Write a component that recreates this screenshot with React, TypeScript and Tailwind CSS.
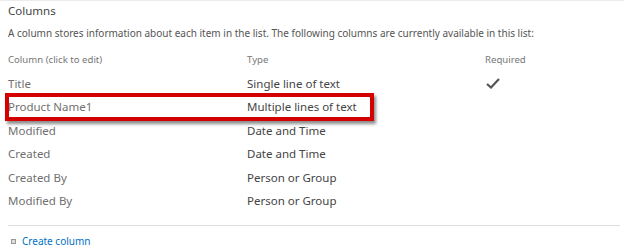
import React from "react";

const rows: { name: string; type: string; required?: boolean }[] = [
  { name: "Title", type: "Single line of text", required: true },
  { name: "Product Name1", type: "Multiple lines of text" },
  { name: "Modified", type: "Date and Time" },
  { name: "Created", type: "Date and Time" },
  { name: "Created By", type: "Person or Group" },
  { name: "Modified By", type: "Person or Group" },
];

function Check() {
  return (
    <svg width="14" height="11" viewBox="0 0 14 11" className="text-[#555]">
      <path d="M1 6 L5 9.5 L13 1" fill="none" stroke="currentColor" strokeWidth="2.2" />
    </svg>
  );
}

export default function App() {
  return (
    <div
      className="relative h-[247px] w-[624px] overflow-hidden bg-white"
      style={{ fontFamily: '"Noto Sans", "Open Sans", sans-serif' }}
    >
      <div className="h-px w-full bg-[#ececec]" />
      <div className="px-2">
        <h2 className="pt-[1px] text-[11.5px] leading-[18px] text-[#444]">Columns</h2>
        <p className="mt-[6px] text-[10px] leading-[14px] text-[#555]">
          A column stores information about each item in the list. The following columns are currently available in this list:
        </p>
        <div className="mt-[13px] grid grid-cols-[239px_238px_1fr] text-[9.6px] leading-[14px] text-[#777]">
          <span>Column (click to edit)</span>
          <span>Type</span>
          <span>Required</span>
        </div>
        <div className="relative mt-[5px]">
          {rows.map((r) => (
            <div
              key={r.name}
              className="grid h-[23.4px] grid-cols-[239px_238px_1fr] items-center text-[11.5px]"
            >
              <span className="text-[#707070]">{r.name}</span>
              <span className="text-[#444]">{r.type}</span>
              <span className="pl-[1px]">{r.required ? <Check /> : null}</span>
            </div>
          ))}
          <div className="pointer-events-none absolute left-[-3px] top-[21px] h-[28px] w-[369px] border-4 border-[#d40000] shadow-[2px_3px_3px_rgba(0,0,0,0.45)]" />
        </div>
        <div className="mt-[13px] h-px w-[612px] bg-[#dcdcdc]" />
        <div className="mt-[8px] flex items-center gap-[6px] pl-[3px]">
          <span className="h-[5px] w-[5px] border border-[#999] bg-[#ddd]" />
          <span className="text-[10px] leading-[14px] text-[#0072c6]">Create column</span>
        </div>
      </div>
    </div>
  );
}
